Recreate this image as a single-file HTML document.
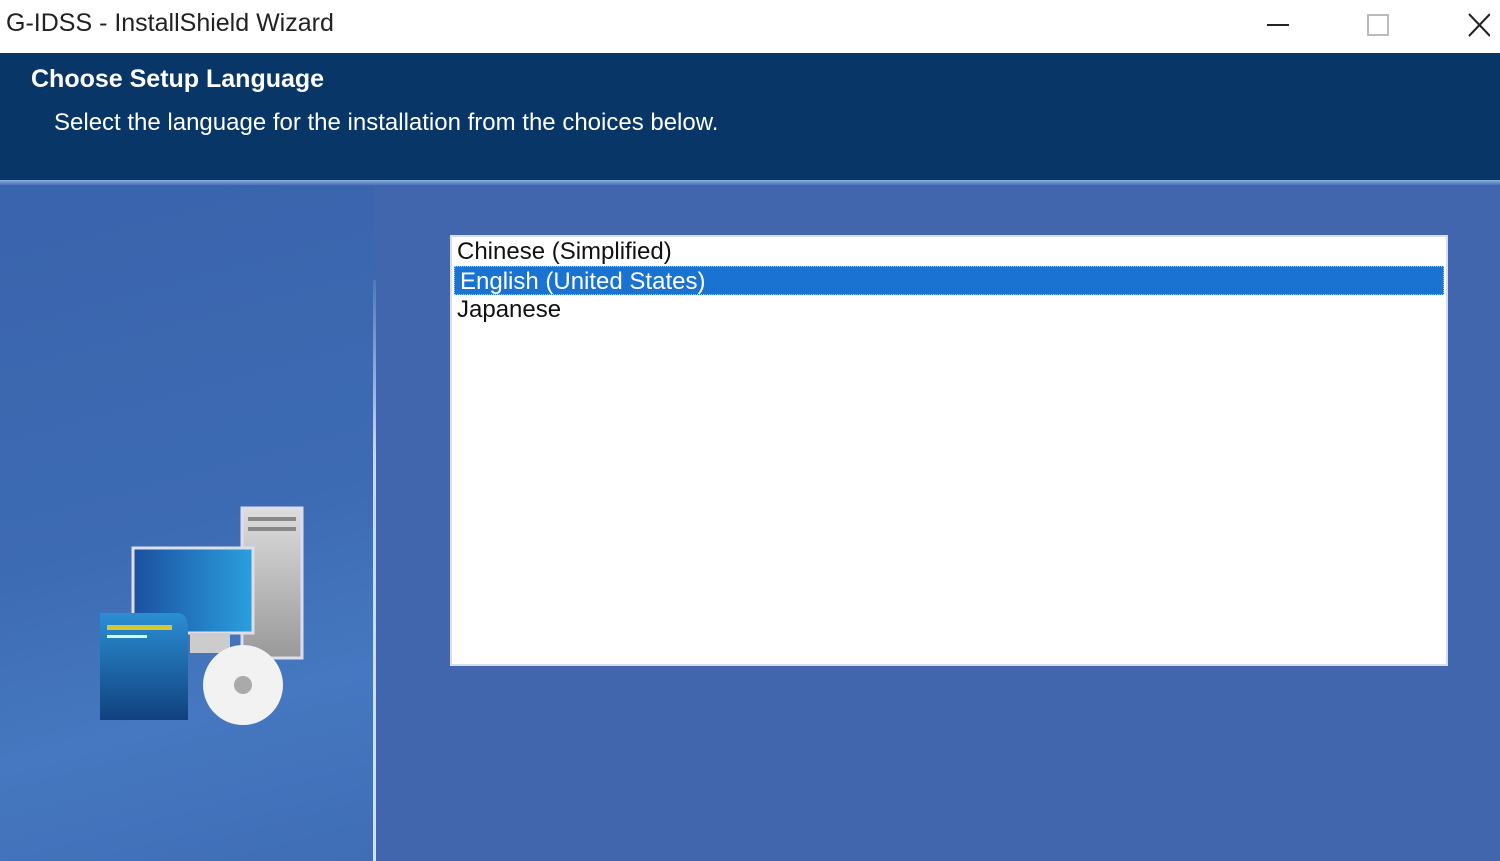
<!DOCTYPE html>
<html><head><style>
*{margin:0;padding:0;box-sizing:border-box}
body{width:1500px;height:861px;overflow:hidden;font-family:"Liberation Sans",sans-serif;background:#4166ae;position:relative}
.tb{position:absolute;left:0;top:0;width:1500px;height:53px;background:#fff}
.tb .t{position:absolute;left:6px;top:9px;font-size:25px;color:#222}
.hd{position:absolute;left:0;top:53px;width:1500px;height:127px;background:#083667}
.hd h1{position:absolute;left:31px;top:12px;font-size:25px;color:#fff;font-weight:bold}
.hd p{position:absolute;left:54px;top:56px;font-size:24px;color:#fff}
.stripe{position:absolute;left:0;top:180px;width:1500px;height:5px;background:linear-gradient(#8fb0dd,#4a74b8)}
.lp{position:absolute;left:0;top:185px;width:374px;height:676px;background:linear-gradient(165deg,#3a64ad 0%,#3d6bb3 50%,#4578c0 75%,#3f6db6 100%)}
.vl{position:absolute;left:373px;top:280px;width:3px;height:581px;background:linear-gradient(#4f78bb,#c9d8ee 30%,#d6e2f2)}
.lb{position:absolute;left:450px;top:235px;width:998px;height:431px;background:#fff;border:2px solid #d8dde6}
.lb div{height:29px;font-size:24px;padding-left:5px;line-height:29px;color:#111}
.lb .s{background:#1a73d0;color:#fff;margin:0 2px;border:1px dotted #9cf}
</style></head><body>
<div class="tb"><div class="t">G-IDSS - InstallShield Wizard</div>
<svg style="position:absolute;left:1260px;top:10px" width="230" height="32">
<line x1="7" y1="15" x2="29" y2="15" stroke="#222" stroke-width="2"/>
<rect x="108" y="5" width="20" height="20" fill="none" stroke="#bbb" stroke-width="2"/>
<line x1="209" y1="4" x2="230" y2="26" stroke="#222" stroke-width="2"/><line x1="230" y1="4" x2="209" y2="26" stroke="#222" stroke-width="2"/>
</svg></div>
<div class="hd"><h1>Choose Setup Language</h1><p>Select the language for the installation from the choices below.</p></div>
<div class="stripe"></div>
<div class="lp"></div>
<div class="vl"></div>
<svg style="position:absolute;left:90px;top:505px" width="220" height="230">
<defs><linearGradient id="m" x1="0" x2="1"><stop offset="0" stop-color="#1b4fa0"/><stop offset="1" stop-color="#2aa0dc"/></linearGradient>
<linearGradient id="b" x1="0" y1="0" x2="0" y2="1"><stop offset="0" stop-color="#2a8fd2"/><stop offset="1" stop-color="#12407f"/></linearGradient>
<linearGradient id="g" x1="0" y1="0" x2="0" y2="1"><stop offset="0" stop-color="#ddd"/><stop offset="1" stop-color="#999"/></linearGradient></defs>
<rect x="152" y="3" width="60" height="150" fill="url(#g)" stroke="#dde" stroke-width="3"/>
<rect x="158" y="12" width="48" height="4" fill="#888"/><rect x="158" y="22" width="48" height="4" fill="#888"/>
<rect x="43" y="43" width="120" height="85" fill="url(#m)" stroke="#dde" stroke-width="3"/>
<rect x="100" y="128" width="40" height="20" fill="#ccc"/>
<path d="M10 108 H88 Q98 108 98 125 V215 H10 Z" fill="url(#b)"/>
<rect x="17" y="120" width="65" height="5" fill="#d8c830"/><rect x="17" y="130" width="40" height="3" fill="#cfe"/>
<circle cx="153" cy="180" r="40" fill="#f2f2f2"/><circle cx="153" cy="180" r="9" fill="#aaa"/>
</svg>
<div class="lb"><div>Chinese (Simplified)</div><div class="s">English (United States)</div><div>Japanese</div></div>
</body></html>
